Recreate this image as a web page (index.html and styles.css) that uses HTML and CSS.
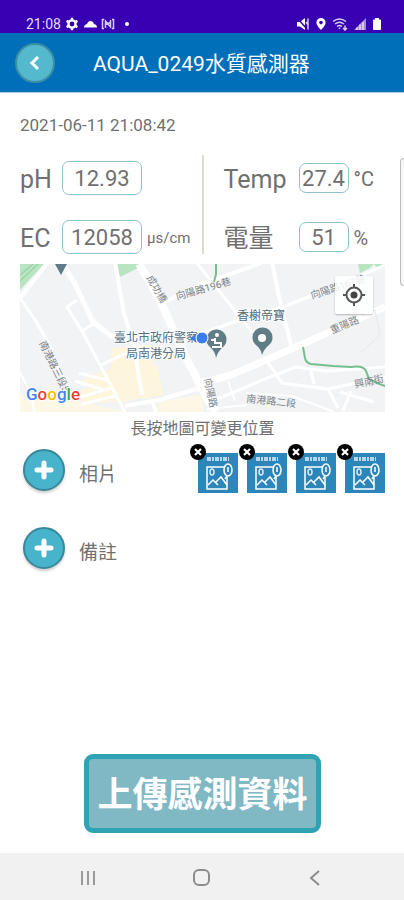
FILE: index.html
```html
<!DOCTYPE html>
<html lang="zh-Hant">
<head>
    <meta charset="UTF-8">
    <meta name="viewport" content="width=device-width, initial-scale=1">
    <title>AQUA_0249水質感測器</title>
    <link rel="stylesheet" href="styles.css">
</head>
<body>
    <div class="status-bar">
        <div class="status-group">
            <span>21:08</span>
            <svg width="14" height="14" viewBox="0 0 14 14" fill="none" stroke="#fff">
                <circle cx="7" cy="7" r="3.6" stroke-width="2.4"/>
                <path d="M7 .8v2M7 11.2v2M1.6 3.9l1.8 1M10.6 9.1l1.8 1M1.6 10.1l1.8-1M10.6 4.9l1.8-1" stroke-width="2.4"/>
            </svg>
            <svg width="14" height="14" viewBox="0 0 14 14" fill="#fff">
                <path d="M1 10.500q0-3 3-3.500 1-3 3.500-3 2.500 0 3.500 3 3 .5 3 3.500z"/>
            </svg>
            <svg width="14" height="14" viewBox="0 0 14 14" fill="none" stroke="#d9ccf2" stroke-width="1.500">
                <path d="M3 2.500H1.500v9H3M11 2.500h1.500v9H11M4.500 11V4l5 6V3M4.500 7.500l5-2"/>
            </svg>
            <span class="status-dot"></span>
        </div>
        <div class="status-group status-right">
            <svg width="14" height="14" viewBox="0 0 14 14">
                <path d="M1 5h3l5-4v12L4 9.500H1z" fill="#fff"/>
                <path d="M1 1l11 12" stroke="#3700b3" stroke-width="1.500"/>
                <path d="M12 1.500v11M10 5l2 3" stroke="#d9ccf2" stroke-width="1.500"/>
            </svg>
            <svg width="12" height="14" viewBox="0 0 12 14">
                <path d="M6 1a4.600 4.600 0 0 0-4.600 4.600C1.400 9 6 13 6 13s4.600-4 4.600-7.400A4.600 4.600 0 0 0 6 1zm0 2.800a1.800 1.800 0 1 1 0 3.600 1.800 1.800 0 0 1 0-3.600z" fill="#fff"/>
            </svg>
            <svg width="16" height="14" viewBox="0 0 16 14" fill="none" stroke="#d9ccf2" stroke-width="1.500">
                <path d="M1 4.500q6.500-5 13 0M3 7q4.500-3.500 9 0M5 9.500q2.500-2 5 0M7.500 12v-1.500M13 8.500v4M11 11l2 2 2-2"/>
            </svg>
            <svg width="14" height="14" viewBox="0 0 14 14">
                <path d="M1 13L13 1v12z" fill="#a58bdc"/>
                <path d="M4 13v-2.500M7 13V7.500M10 13V5" stroke="#e6dcf8" stroke-width="1.500"/>
            </svg>
            <svg width="10" height="14" viewBox="0 0 10 14" fill="#fff">
                <path d="M3 1h4v1.500h1.200q.8 0 .8.800v9q0 .7-.8.700H1.800q-.8 0-.8-.7v-9q0-.8.800-.8H3z"/>
            </svg>
        </div>
    </div>

    <header class="app-bar">
        <button class="round-btn back-btn" aria-label="返回">
            <svg width="16" height="20" viewBox="0 0 16 20" fill="none" stroke="#fff" stroke-width="3">
                <path d="M11 4L5 10l6 6"/>
            </svg>
        </button>
        <h1>AQUA_0249水質感測器</h1>
    </header>

    <main>
        <time class="timestamp" datetime="2021-06-11T21:08:42">2021-06-11 21:08:42</time>

        <section class="readings">
            <div class="reading-col left">
                <label for="ph">pH</label>
                <input id="ph" type="text" value="12.93" readonly>
                <span></span>
                <label for="ec">EC</label>
                <input id="ec" type="text" value="12058" readonly>
                <span class="unit small">µs/cm</span>
            </div>
            <div class="divider"></div>
            <div class="reading-col right">
                <label for="temp">Temp</label>
                <input id="temp" type="text" value="27.4" readonly>
                <span class="unit">°C</span>
                <label for="battery">電量</label>
                <input id="battery" type="text" value="51" readonly>
                <span class="unit">%</span>
            </div>
        </section>

        <div class="map">
            <svg class="map-canvas" viewBox="0 0 365 148" preserveAspectRatio="xMidYMid slice">
                <rect width="365" height="148" fill="#f1f3f4"/>

                <!-- commercial blocks -->
                <path d="M92 84l38-3 10 48-36 9-42 1-2-12 10-4-9-6 14-7 16-5z" fill="#fdf5dc"/>
                <path d="M118 91l20 12 5 28-20 4z" fill="#fdf5dc"/>
                <path d="M0 129l22 6 40 3 45 10H0z" fill="#fdf8e6"/>
                <path d="M138 138l45-8v18h-45z" fill="#fdf8e6"/>

                <!-- parks -->
                <path d="M0 0h24L0 26z" fill="#b9e4c1"/>
                <path d="M0 11L13 0M0 17L18 0" stroke="#86c797" fill="none"/>
                <path d="M97 0h25l-4 4-18 9z" fill="#b9e4c1"/>
                <path d="M338 0h16l-4 4-10 5z" fill="#b9e4c1"/>
                <path d="M354 0h11v2l-8 2z" fill="#b9e4c1"/>

                <!-- roads -->
                <g fill="none" stroke="#fff" stroke-linejoin="round">
                    <path d="M28-2L0 34" stroke-width="4"/>
                    <path d="M0 34L14 54 30 82 38 104 50 125" stroke-width="3"/>
                    <path d="M0 108l12 25 2 15" stroke-width="2"/>
                    <path d="M43 0l12 20 18 38 18 14 16 4" stroke-width="5"/>
                    <path d="M57 36L47 43 62 67 96 131l9 17M62 67l13-8M81 101l32-15" stroke-width="3"/>
                    <path d="M95-2l9 52 10 32 8 49" stroke-width="4"/>
                    <path d="M59 109l28 7M55 117l29 9M60 133l32-9M62 140l33-8" stroke-width="3"/>
                    <path d="M119 0l20 34 27 60 22 42 8 12" stroke-width="8"/>
                    <path d="M144 38l36-17 61-22" stroke-width="4"/>
                    <path d="M176-2l56 70" stroke-width="3"/>
                    <path d="M165 75l52-18 48-15 62-24 38-17" stroke-width="3"/>
                    <path d="M252-2l7 35 13 52" stroke-width="4"/>
                    <path d="M178 120l33-9 65-28 89-40" stroke-width="7"/>
                    <path d="M105 142l34-6 48-14M136 148l-4-12" stroke-width="4"/>
                    <path d="M188 139l62-26 26-10 30 4 59-4" stroke-width="3"/>
                    <path d="M247 97l15 22 46 6 57-12M291 107l3 13M308 125l10 19M331 127l-8 20M320 128l34 10" stroke-width="3"/>
                    <path d="M208 117l7 20M226 129l46 3 42 16M187 145l40-4" stroke-width="2"/>
                </g>
                <path d="M341 51l14-5 5 25-19 17" stroke="#e6e9eb" fill="none"/>
                <path d="M196 0v10l-2 8" stroke="#75bf8f" stroke-width="2" fill="none"/>
                <path d="M283 83l2 11q1 5 6 6l22 2 18 1q12-2 15 4l3 8 8 4 8 3" stroke="#75bf8f" stroke-width="2" fill="none"/>

                <g class="road-name">
                    <text transform="translate(126 14) rotate(59)">成功橋</text>
                    <text transform="translate(157 36) rotate(-16)">向陽路196巷</text>
                    <text transform="translate(292 35) rotate(-18)">向陽路167巷</text>
                    <text transform="translate(312 70) rotate(-23)">重陽路</text>
                    <text transform="translate(335 124) rotate(-12)">興南街</text>
                    <text transform="translate(226 138) rotate(6)">南港路二段</text>
                    <text transform="translate(184 115) rotate(78)">向陽路</text>
                    <text transform="translate(19 79) rotate(64)">南港路三段5</text>
                </g>
                <g class="place-name">
                    <text x="217" y="56">香榭帝寶</text>
                    <text x="94" y="78">臺北市政府警察</text>
                    <text x="106" y="94">局南港分局</text>
                </g>

                <!-- pins -->
                <path d="M35 0h12l-6 11z" fill="#5f7a89"/>
                <path d="M196 94q-1-7-6-11a10 10 0 1 1 13 0q-5 4-7 11z" fill="#607d86"/>
                <circle cx="197" cy="71" r="2" fill="#fff"/>
                <path d="M191 76h4M195 74v5h6v4h-9" fill="none" stroke="#fff" stroke-width="2"/>
                <path d="M242 91q-1-6-6-10a10 10 0 1 1 13 0q-5 4-7 10z" fill="#607d86"/>
                <circle cx="242" cy="74" r="4" fill="#fff"/>
                <path d="M170 74l6-4v8z" fill="#3b7ded"/>
                <circle cx="182" cy="74" r="6" fill="#3b7ded" stroke="#fff"/>

                <text class="map-logo" x="6" y="136"><tspan fill="#4285f4">G</tspan><tspan fill="#ea4335">o</tspan><tspan fill="#fbbc05">o</tspan><tspan fill="#4285f4">g</tspan><tspan fill="#34a853">l</tspan><tspan fill="#ea4335">e</tspan></text>
            </svg>
            <button class="locate-btn" aria-label="我的位置">
                <svg width="22" height="22" viewBox="0 0 22 22" fill="none" stroke="#555" stroke-width="2">
                    <circle cx="11" cy="11" r="7.500"/>
                    <circle cx="11" cy="11" r="3.500" fill="#444" stroke="none"/>
                    <path d="M11 0v4M11 18v4M0 11h4M18 11h4"/>
                </svg>
            </button>
        </div>
        <p class="map-hint">長按地圖可變更位置</p>

        <section class="attach-row">
            <button class="round-btn add-btn" id="add-photo" aria-label="新增相片">
                <svg width="20" height="20" viewBox="0 0 20 20" stroke="#fff" stroke-width="5" stroke-linecap="round">
                    <path d="M10 3v14M3 10h14"/>
                </svg>
            </button>
            <label for="add-photo">相片</label>
            <div class="photos">
                <div class="photo">
                    <svg viewBox="0 0 40 40"><use href="#photo-icon"/></svg>
                    <button class="remove-btn" aria-label="移除"><svg width="8" height="8" viewBox="0 0 8 8"><use href="#cross"/></svg></button>
                </div>
                <div class="photo">
                    <svg viewBox="0 0 40 40"><use href="#photo-icon"/></svg>
                    <button class="remove-btn" aria-label="移除"><svg width="8" height="8" viewBox="0 0 8 8"><use href="#cross"/></svg></button>
                </div>
                <div class="photo">
                    <svg viewBox="0 0 40 40"><use href="#photo-icon"/></svg>
                    <button class="remove-btn" aria-label="移除"><svg width="8" height="8" viewBox="0 0 8 8"><use href="#cross"/></svg></button>
                </div>
                <div class="photo">
                    <svg viewBox="0 0 40 40"><use href="#photo-icon"/></svg>
                    <button class="remove-btn" aria-label="移除"><svg width="8" height="8" viewBox="0 0 8 8"><use href="#cross"/></svg></button>
                </div>
            </div>
        </section>

        <section class="attach-row">
            <button class="round-btn add-btn" id="add-note" aria-label="新增備註">
                <svg width="20" height="20" viewBox="0 0 20 20" stroke="#fff" stroke-width="5" stroke-linecap="round">
                    <path d="M10 3v14M3 10h14"/>
                </svg>
            </button>
            <label for="add-note">備註</label>
        </section>

        <button class="upload-btn">上傳感測資料</button>
    </main>

    <nav class="nav-bar">
        <button aria-label="最近">
            <svg width="20" height="20" viewBox="0 0 20 20" stroke="#999" stroke-width="2"><path d="M4 3v14M10 3v14M16 3v14"/></svg>
        </button>
        <button aria-label="首頁">
            <svg width="20" height="20" viewBox="0 0 20 20" fill="none" stroke="#8c8c8c" stroke-width="2"><rect x="2" y="2" width="15" height="15" rx="5"/></svg>
        </button>
        <button aria-label="返回">
            <svg width="20" height="20" viewBox="0 0 20 20" fill="none" stroke="#8c8c8c" stroke-width="2"><path d="M13 3l-8 7 8 7"/></svg>
        </button>
    </nav>

    <!-- edge panel handle -->
    <div class="edge-handle"></div>

    <svg class="symbols" width="0" height="0">
        <symbol id="photo-icon" viewBox="0 0 40 40">
            <rect width="40" height="40" fill="#2d86b9"/>
            <path d="M9 6h22" stroke="#b5d7e9" stroke-width="4" stroke-dasharray="4 1 2 1"/>
            <path d="M26 14H9v22h20V24" fill="none" stroke="#fff" stroke-width="1.500"/>
            <ellipse cx="30" cy="17" rx="4" ry="6" fill="none" stroke="#fff" stroke-width="1.500"/>
            <path d="M30 14v5M29 23l-2 3" stroke="#fff" stroke-width="1.500"/>
            <ellipse cx="14" cy="19" rx="2" ry="3" fill="none" stroke="#d7eaf4" stroke-width="1.500"/>
            <path d="M10 32l5-5 5 5M17 30l6-6 6 8" fill="none" stroke="#fff" stroke-width="1.500"/>
        </symbol>
        <symbol id="cross" viewBox="0 0 8 8">
            <path d="M1 1l6 6M7 1L1 7" stroke="#fff" stroke-width="2.200"/>
        </symbol>
    </svg>
</body>
</html>
```
FILE: styles.css
```css
* {
    margin: 0;
    padding: 0;
    box-sizing: border-box;
}

body {
    position: relative;
    display: flex;
    flex-direction: column;
    min-height: 100vh;
    overflow-x: hidden;
    background: #fff;
    color: #707070;
    font-family: Roboto, "Noto Sans CJK TC", sans-serif;
}

button {
    border: none;
    background: none;
    font-family: inherit;
    cursor: pointer;
}

svg {
    display: block;
    flex: none;
}

/* System status bar */
.status-bar {
    display: flex;
    justify-content: space-between;
    height: 33px;
    padding: 14px 22px 0 26px;
    background: #3700b3;
    color: #e6dcf8;
    font-size: 14px;
    line-height: 18px;
}

.status-group {
    display: flex;
    align-items: center;
    gap: 4px;
}

.status-right {
    gap: 5px;
}

.status-dot {
    width: 4px;
    height: 4px;
    margin-left: 6px;
    border-radius: 50%;
    background: #fff;
}

/* App bar */
.app-bar {
    display: flex;
    align-items: center;
    gap: 38px;
    height: 60px;
    padding-left: 15px;
    background: #006fba;
    border-bottom: 1px solid #a9cdea;
}

.app-bar h1 {
    padding-top: 2px;
    color: #fff;
    font-size: 21px;
    font-weight: 400;
    line-height: 28px;
}

.round-btn {
    display: flex;
    flex: none;
    align-items: center;
    justify-content: center;
    border-radius: 50%;
}

.back-btn {
    width: 40px;
    height: 40px;
    border: 2px solid #3d8fa3;
    background: #55b9cd;
}

main {
    display: flex;
    flex: 1;
    flex-direction: column;
    padding: 22px 19px 20px 20px;
}

.timestamp {
    font-size: 17px;
    line-height: 20px;
}

/* Sensor readings */
.readings {
    display: grid;
    grid-template-columns: 1fr 2px 1fr;
    margin-top: 20px;
}

.reading-col {
    display: grid;
    grid-auto-rows: 46px;
    row-gap: 13px;
    align-items: center;
}

.reading-col.left {
    grid-template-columns: 42px 80px 1fr;
}

.reading-col.right {
    grid-template-columns: 75px 50px 1fr;
    padding-left: 20px;
}

.reading-col label {
    padding-top: 4px;
    font-size: 25px;
    line-height: 32px;
}

.reading-col input {
    width: 100%;
    height: 34px;
    border: 1px solid #8fc3c9;
    border-radius: 7px;
    background: #fff;
    color: inherit;
    font-family: inherit;
    font-size: 22px;
    text-align: center;
    outline: none;
}

.reading-col.right input {
    height: 30px;
}

.unit {
    padding: 2px 0 0 5px;
    font-size: 20px;
    line-height: 24px;
}

.unit.small {
    font-size: 15px;
}

.divider {
    margin-bottom: 6px;
    background: #dfdccb;
}

/* Map */
.map {
    position: relative;
    margin-top: 4px;
}

.map-canvas {
    width: 100%;
    overflow: hidden;
}

.road-name {
    fill: #7d8388;
    font-size: 10px;
}

.place-name {
    fill: #56707e;
    stroke: #fff;
    stroke-width: 2px;
    paint-order: stroke;
    font-size: 12px;
}

.map-logo {
    stroke: #fff;
    stroke-width: 2px;
    paint-order: stroke;
    font-size: 17px;
    font-weight: 500;
}

.locate-btn {
    position: absolute;
    top: 12px;
    right: 12px;
    display: flex;
    align-items: center;
    justify-content: center;
    width: 38px;
    height: 38px;
    border-radius: 2px;
    background: rgba(255, 255, 255, 0.85);
    box-shadow: 0 1px 2px rgba(0, 0, 0, 0.25);
}

.map-hint {
    margin-top: 5px;
    font-size: 16px;
    line-height: 24px;
    text-align: center;
}

/* Photos and notes */
.attach-row {
    display: flex;
    align-items: center;
    height: 42px;
    margin-top: 8px;
    padding-left: 3px;
}

.attach-row + .attach-row {
    margin-top: 36px;
}

.attach-row label {
    padding: 10px 0 0 14px;
    font-size: 19px;
    line-height: 28px;
}

.add-btn {
    width: 42px;
    height: 42px;
    border: 2px solid #39889a;
    background: #48b4cb;
    box-shadow: 0 2px 3px rgba(0, 0, 0, 0.2);
}

.photos {
    display: flex;
    gap: 9px;
    margin-left: auto;
    padding-top: 6px;
}

.photo {
    position: relative;
    width: 40px;
    height: 40px;
}

.remove-btn {
    position: absolute;
    top: -9px;
    left: -8px;
    display: flex;
    align-items: center;
    justify-content: center;
    width: 16px;
    height: 16px;
    border-radius: 50%;
    background: #000;
}

.upload-btn {
    align-self: center;
    margin-top: auto;
    padding: 10px 8px 6px;
    border: 5px solid #2fa2b4;
    border-radius: 9px;
    background: #80b8c4;
    color: #fff;
    font-size: 35px;
    font-weight: 700;
    line-height: 53px;
}

/* System navigation */
.nav-bar {
    display: grid;
    grid-template-columns: repeat(3, 1fr);
    height: 47px;
    padding: 2px 31px 0;
    background: #f1f1f1;
}

.nav-bar button {
    display: flex;
    align-items: center;
    justify-content: center;
}

.edge-handle {
    position: absolute;
    top: 158px;
    right: 0;
    width: 4px;
    height: 128px;
    border: 1px solid #bbb;
    border-right: none;
    border-radius: 4px 0 0 4px;
    background: #f5f5f5;
}

.symbols {
    position: absolute;
}
```
